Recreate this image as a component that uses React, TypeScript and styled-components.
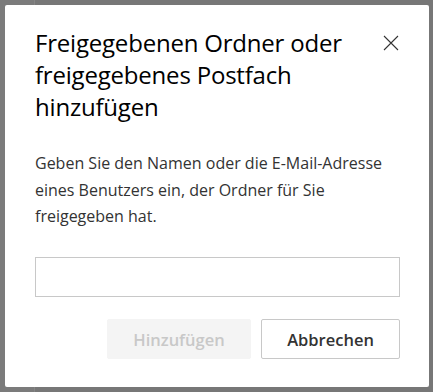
import React from 'react';
import styled, { createGlobalStyle } from 'styled-components';

const GlobalStyle = createGlobalStyle`
  html, body {
    margin: 0;
    padding: 0;
    background: #7a7a7a;
  }
  body {
    font-family: "Open Sans", "Noto Sans", sans-serif;
  }
`;

const Backdrop = styled.div`
  width: 433px;
  height: 392px;
  box-sizing: border-box;
  padding: 5px 4px 5px 5px;
  background: linear-gradient(to right, #7b7b7b 0, #7b7b7b 34px, #858585 34px, #858585 35px, #777777 35px);
  display: flex;
`;

const Dialog = styled.div`
  flex: 1;
  background: #ffffff;
  border-radius: 2px;
  box-sizing: border-box;
  padding: 22px 29px 28px 30px;
  display: flex;
  flex-direction: column;
`;

const Header = styled.div`
  display: flex;
  align-items: flex-start;
  justify-content: space-between;
`;

const Title = styled.h1`
  margin: 0;
  font-size: 24px;
  font-weight: 400;
  line-height: 32px;
  color: #000000;
  letter-spacing: -0.2px;
  max-width: 330px;
`;

const CloseButton = styled.button`
  border: none;
  background: none;
  padding: 0;
  margin: 8px 1px 0 0;
  width: 16px;
  height: 16px;
  display: flex;
  align-items: center;
  justify-content: center;
  cursor: pointer;
`;

const Description = styled.p`
  margin: 27px 0 0;
  font-size: 16px;
  line-height: 26.5px;
  color: #333333;
`;

const NameInput = styled.input`
  margin-top: 27px;
  height: 41px;
  box-sizing: border-box;
  border: 1px solid #c8c8c8;
  border-radius: 0;
  outline: none;
  padding: 0 10px;
  font-family: inherit;
  font-size: 16px;
`;

const Actions = styled.div`
  margin-top: 22px;
  display: flex;
  justify-content: flex-end;
  gap: 10px;
`;

const ActionButton = styled.button<{ $primary?: boolean }>`
  height: 40px;
  box-sizing: border-box;
  padding: 0;
  width: ${p => (p.$primary ? '144px' : '139px')};
  border-radius: 2px;
  border: 1px solid ${p => (p.$primary ? '#f4f4f4' : '#c8c8c8')};
  background: ${p => (p.$primary ? '#f4f4f4' : '#ffffff')};
  color: ${p => (p.$primary ? '#c8c8c8' : '#333333')};
  font-family: inherit;
  font-size: 16.5px;
  font-weight: 600;
  cursor: ${p => (p.$primary ? 'default' : 'pointer')};
`;

export default function App() {
  return (
    <>
      <GlobalStyle />
      <Backdrop>
        <Dialog>
          <Header>
            <Title>Freigegebenen Ordner oder freigegebenes Postfach hinzufügen</Title>
            <CloseButton aria-label="Schließen">
              <svg width="16" height="16" viewBox="0 0 16 16">
                <path d="M1 1L15 15M15 1L1 15" stroke="#333" strokeWidth="1.1" fill="none" />
              </svg>
            </CloseButton>
          </Header>
          <Description>
            Geben Sie den Namen oder die E-Mail-Adresse eines Benutzers ein, der Ordner für Sie freigegeben hat.
          </Description>
          <NameInput aria-label="Name oder E-Mail-Adresse" />
          <Actions>
            <ActionButton $primary disabled>Hinzufügen</ActionButton>
            <ActionButton>Abbrechen</ActionButton>
          </Actions>
        </Dialog>
      </Backdrop>
    </>
  );
}
